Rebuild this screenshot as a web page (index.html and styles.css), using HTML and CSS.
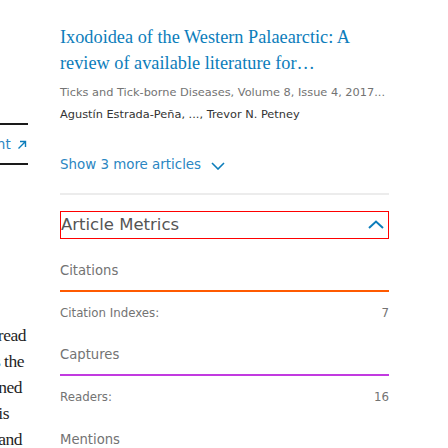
FILE: index.html
```html
<!DOCTYPE html>
<html lang="en">
<head>
<meta charset="utf-8">
<link rel="stylesheet" href="styles.css">
</head>
<body>
<div class="page">
  <aside class="left">
    <div class="left-inner">
      <div class="rule thin"></div>
      <a class="ext-link">View full text content <svg class="ext-icon" viewBox="0 0 10 10" width="10" height="10"><path d="M1.5 8.5 L8.5 1.5 M3 1.5 H8.5 V7" fill="none" stroke="#0c7dbb" stroke-width="1.4"/></svg></a>
      <div class="rule thick"></div>
      <div class="body-text">
        <div class="ln l1">were widespread</div>
        <div class="ln l2">across the</div>
        <div class="ln l3">examined</div>
        <div class="ln l4">This is</div>
        <div class="ln l5">and</div>
      </div>
    </div>
  </aside>
  <main class="right">
    <a class="art-title">Ixodoidea of the Western Palaearctic: A review of available literature for…</a>
    <div class="journal">Ticks and Tick-borne Diseases, Volume 8, Issue 4, 2017...</div>
    <div class="authors">Agustín Estrada-Peña, ..., Trevor N. Petney</div>
    <a class="show-more">Show 3 more articles <svg class="chev" viewBox="0 0 14 8" width="14" height="8"><path d="M1 1 L7 7 L13 1" fill="none" stroke="#0c7dbb" stroke-width="1.6"/></svg></a>
    <div class="sep"></div>
    <div class="metrics-head">
      <span class="metrics-title">Article Metrics</span>
      <svg class="chev-up" viewBox="0 0 16 9" width="16" height="9"><path d="M1 8 L8 1.5 L15 8" fill="none" stroke="#0c7dbb" stroke-width="2"/></svg>
    </div>
    <section class="metric">
      <div class="metric-label">Citations</div>
      <div class="metric-bar orange"></div>
      <div class="metric-row"><span>Citation Indexes:</span><span>7</span></div>
    </section>
    <section class="metric">
      <div class="metric-label">Captures</div>
      <div class="metric-bar purple"></div>
      <div class="metric-row"><span>Readers:</span><span>16</span></div>
    </section>
    <section class="metric last">
      <div class="metric-label">Mentions</div>
    </section>
  </main>
</div>
</body>
</html>
```
FILE: styles.css
```css
html, body {
  margin: 0;
  padding: 0;
  background: #fff;
  overflow: hidden;
}
.page {
  display: flex;
  width: 448px;
  height: 448px;
  overflow: hidden;
}
.left {
  width: 28px;
  flex: none;
  overflow: hidden;
}
.left-inner {
  width: 300px;
  margin-left: -272px;
  padding-top: 123px;
}
.rule {
  background: #1a1a1a;
}
.rule.thin { height: 2px; }
.rule.thick { height: 2px; }
.ext-link {
  display: block;
  text-align: right;
  font-family: "DejaVu Sans", sans-serif;
  font-size: 13.5px;
  line-height: 38px;
  color: #2a86c2;
  white-space: nowrap;
  padding-right: 1px;
}
.ext-icon { vertical-align: -1px; margin-left: 2px; }
.body-text {
  padding-top: 157px;
  font-family: "Liberation Serif", serif;
  font-size: 17.5px;
  letter-spacing: -0.5px;
  line-height: 26px;
  color: #1f1f1f;
}
.ln { text-align: right; white-space: nowrap; }
.l1 { padding-right: 2px; }
.l2 { padding-right: 4px; }
.l3 { padding-right: 6px; }
.l4 { padding-right: 19px; }
.l5 { padding-right: 6px; }

.right {
  width: 329px;
  margin-left: 32px;
  flex: none;
  padding-top: 24px;
  font-family: "DejaVu Sans", sans-serif;
}
.art-title {
  display: block;
  font-family: "Liberation Serif", serif;
  font-size: 18.3px;
  line-height: 26px;
  color: #0c7dbb;
}
.journal {
  margin-top: 5px;
  font-size: 11.35px;
  line-height: 22px;
  color: #737373;
  white-space: nowrap;
}
.authors {
  font-size: 11.35px;
  line-height: 22px;
  color: #333;
}
.show-more {
  display: flex;
  align-items: center;
  gap: 10px;
  margin-top: 28px;
  font-size: 13.4px;
  line-height: 24px;
  color: #2a86c2;
}
.chev { margin-top: 2px; }
.sep {
  margin-top: 16px;
  height: 2px;
  background: #ececec;
}
.metrics-head {
  margin-top: 16px;
  height: 26px;
  border: 1px solid #f00;
  display: flex;
  align-items: center;
  justify-content: space-between;
  padding: 0 4px 0 0;
}
.metrics-title {
  font-size: 16.5px;
  color: #555;
  line-height: 26px;
}
.chev-up { margin-top: -2px; }
.metric { padding-top: 22px; }
.metric.last { padding-top: 23px; }
.metric-label {
  font-size: 13.2px;
  line-height: 20px;
  color: #737373;
}
.metric-bar {
  margin-top: 9px;
  height: 2px;
}
.metric-bar.orange { background: #ff5a00; }
.metric-bar.purple { background: #c23ae0; }
.metric-row {
  display: flex;
  justify-content: space-between;
  margin-top: 11px;
  font-size: 11.8px;
  line-height: 20px;
  color: #737373;
}
```
